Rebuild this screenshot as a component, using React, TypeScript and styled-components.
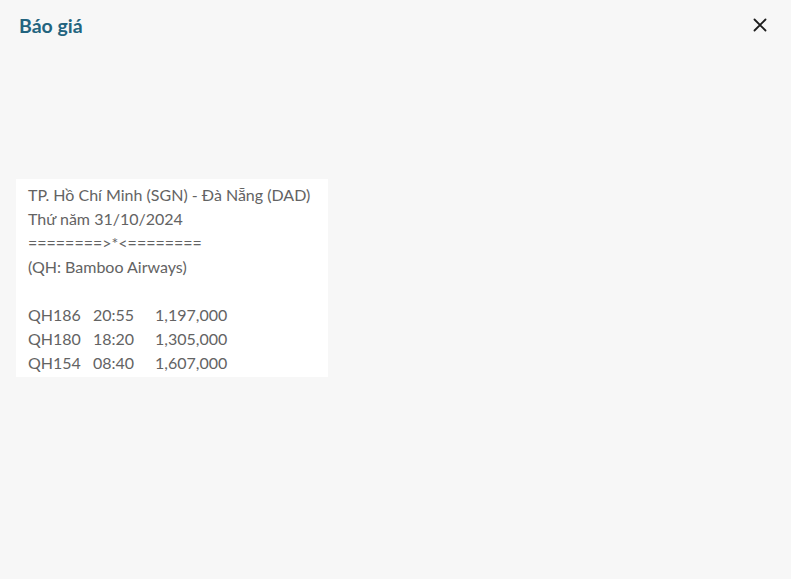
import { FC } from "react";
import styled, { createGlobalStyle } from "styled-components";

const GlobalStyle = createGlobalStyle`
  html, body {
    margin: 0;
    padding: 0;
    background: #f7f7f7;
    font-family: Lato, "Noto Sans", sans-serif;
  }
`;

const flights = [
  { code: "QH186", time: "20:55", price: "1,197,000" },
  { code: "QH180", time: "18:20", price: "1,305,000" },
  { code: "QH154", time: "08:40", price: "1,607,000" },
];

const App: FC = () => {
  return (
    <>
      <GlobalStyle />
      <Page>
        <Header>
          <Title>Báo giá</Title>
          <CloseButton aria-label="Đóng">
            <svg width="14" height="14" viewBox="0 0 14 14">
              <path
                d="M1.5 1.5 L12.5 12.5 M12.5 1.5 L1.5 12.5"
                stroke="#1c1c1c"
                strokeWidth="1.8"
                strokeLinecap="round"
              />
            </svg>
          </CloseButton>
        </Header>

        <QuoteCard>
          <Line>TP. Hồ Chí Minh (SGN) - Đà Nẵng (DAD)</Line>
          <Line>Thứ năm 31/10/2024</Line>
          <Line>========&gt;*&lt;========</Line>
          <Line>(QH: Bamboo Airways)</Line>
          <Line />
          {flights.map((f) => (
            <FlightRow key={f.code}>
              <span>{f.code}</span>
              <span>{f.time}</span>
              <span>{f.price}</span>
            </FlightRow>
          ))}
        </QuoteCard>
      </Page>
    </>
  );
};

const Page = styled.div`
  width: 791px;
  height: 579px;
  background: #f7f7f7;
  padding: 0 16px;
  box-sizing: border-box;
  display: flex;
  flex-direction: column;
  align-items: flex-start;
`;

const Header = styled.div`
  align-self: stretch;
  display: flex;
  align-items: center;
  justify-content: space-between;
  height: 50px;
  padding: 0 6px 0 3px;
`;

const Title = styled.h2`
  margin: 0;
  font-size: 19.5px;
  font-weight: 700;
  color: #23647f;
`;

const CloseButton = styled.button`
  border: none;
  background: transparent;
  padding: 0;
  width: 18px;
  height: 18px;
  display: flex;
  align-items: center;
  justify-content: center;
  cursor: pointer;
`;

const QuoteCard = styled.div`
  margin-top: 129px;
  width: 312px;
  box-sizing: border-box;
  background: #ffffff;
  padding: 4px 12px 2px;
  color: #636363;
  font-size: 16px;
  line-height: 24px;
`;

const Line = styled.div`
  height: 24px;
  white-space: pre;
`;

const FlightRow = styled.div`
  display: grid;
  grid-template-columns: 65px 62px auto;
  height: 24px;
`;

export default App;
